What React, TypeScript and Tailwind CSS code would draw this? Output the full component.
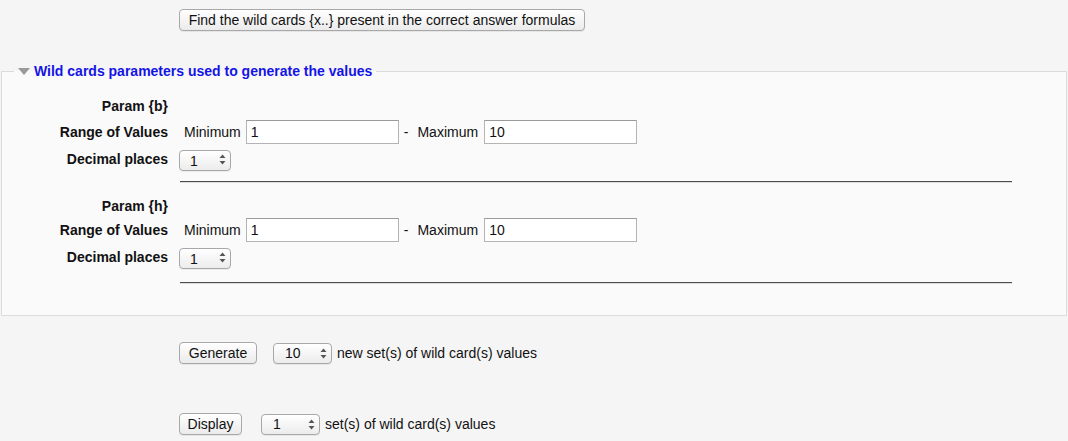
import React from 'react';

const MacButton: React.FC<{ label: string; width: string }> = ({ label, width }) => (
  <button
    type="button"
    className={`${width} h-[22px] shrink-0 rounded-[4px] border border-[#a8a8a8] bg-linear-to-b from-white to-[#ebebeb] text-[14px] leading-none text-[#111] shadow-[0_1px_0_rgba(0,0,0,0.06)]`}
  >
    {label}
  </button>
);

// mac style popup select, arrows drawn on top of a plain select
const MacSelect: React.FC<{ value: string; options: string[]; width: string; pad: string }> = ({
  value,
  options,
  width,
  pad,
}) => (
  <div className={`relative ${width} h-[21px] shrink-0`}>
    <select
      defaultValue={value}
      className={`h-full w-full appearance-none rounded-[4px] border border-[#a8a8a8] bg-linear-to-b from-white to-[#ececec] ${pad} text-[14px] leading-none text-[#111] shadow-[0_1px_0_rgba(0,0,0,0.06)] outline-none`}
    >
      {options.map((o) => (
        <option key={o}>{o}</option>
      ))}
    </select>
    <svg
      className="pointer-events-none absolute right-[5px] top-[5px]"
      width="7"
      height="11"
      viewBox="0 0 7 11"
    >
      <path d="M3.5 0.5 L6.5 4 L0.5 4 Z" fill="#555" />
      <path d="M0.5 7 L6.5 7 L3.5 10.5 Z" fill="#555" />
    </svg>
  </div>
);

const TextBox: React.FC<{ value: string }> = ({ value }) => (
  <input
    type="text"
    defaultValue={value}
    className="h-[24px] w-[153px] shrink-0 border border-[#b4b4b4] border-t-[#9a9a9a] bg-white px-[4px] text-[14px] text-[#111] outline-none"
  />
);

const Label: React.FC<{ text: string }> = ({ text }) => (
  <div className="w-[167px] shrink-0 pr-[1px] text-right text-[14px] font-bold text-[#111]">{text}</div>
);

const Rule: React.FC<{ top: string; bottom: string }> = ({ top, bottom }) => (
  <div className={`${top} ${bottom} ml-[178px] mr-[54px] h-[2px] border-t border-t-[#4d4d4d] border-b border-b-[#dcdcdc]`} />
);

const ParamBlock: React.FC<{ name: string; rowH: string; rangeH: string; decH: string }> = ({
  name,
  rowH,
  rangeH,
  decH,
}) => (
  <>
    <div className={`flex ${rowH} items-center`}>
      <Label text={`Param {${name}}`} />
    </div>
    <div className={`flex ${rangeH} items-center`}>
      <Label text="Range of Values" />
      <div className="ml-[15px] flex items-center text-[14px] text-[#111]">
        <span>Minimum</span>
        <div className="ml-[5px]">
          <TextBox value="1" />
        </div>
        <span className="ml-[5px]">-</span>
        <span className="ml-[9px]">Maximum</span>
        <div className="ml-[6px]">
          <TextBox value="10" />
        </div>
      </div>
    </div>
    <div className={`flex ${decH} items-center`}>
      <Label text="Decimal places" />
      <div className="ml-[10px]">
        <MacSelect value="1" options={['0', '1', '2', '3', '4']} width="w-[52px]" pad="pl-[10px]" />
      </div>
    </div>
  </>
);

const App: React.FC = () => {
  return (
    <div className="min-h-screen w-[1068px] bg-[#f5f5f5] font-[family-name:Liberation_Sans,Arial,sans-serif] text-[#111]">
      {/* top action */}
      <div className="h-[63px] pl-[179px] pt-[8px]">
        <MacButton label="Find the wild cards {x..} present in the correct answer formulas" width="w-[406px]" />
      </div>

      {/* wild cards fieldset */}
      <fieldset className="ml-[1px] w-[1066px] border border-[#dcdcdc] bg-[#fafafa]">
        <legend className="ml-[12px] h-[16px] px-[4px] text-[14px] font-bold leading-[16px] text-[#1414e6]">
          <svg className="mr-[4px] inline-block align-[1px]" width="12" height="7" viewBox="0 0 12 7">
            <path d="M0 0 L12 0 L6 7 Z" fill="#9a9a9a" />
          </svg>
          Wild cards parameters used to generate the values
        </legend>
        <div className="pt-[15px] pb-[31px]">
          <ParamBlock name="b" rowH="h-[24px]" rangeH="h-[28px]" decH="h-[26px]" />
          <Rule top="mt-[9px]" bottom="mb-[11px]" />
          <ParamBlock name="h" rowH="h-[24px]" rangeH="h-[24px]" decH="h-[30px]" />
          <Rule top="mt-[10px]" bottom="mb-0" />
        </div>
      </fieldset>

      {/* generate */}
      <div className="mt-[26px] flex items-center pl-[179px] text-[14px]">
        <MacButton label="Generate" width="w-[78px]" />
        <div className="ml-[16px]">
          <MacSelect value="10" options={['1', '5', '10', '20', '50']} width="w-[59px]" pad="pl-[11px]" />
        </div>
        <span className="ml-[5px]">new set(s) of wild card(s) values</span>
      </div>

      {/* display */}
      <div className="mt-[49px] flex items-center pl-[179px] text-[14px]">
        <MacButton label="Display" width="w-[63px]" />
        <div className="ml-[19px]">
          <MacSelect value="1" options={['1', '2', '5', '10']} width="w-[59px]" pad="pl-[11px]" />
        </div>
        <span className="ml-[5px]">set(s) of wild card(s) values</span>
      </div>
    </div>
  );
};

export default App;
